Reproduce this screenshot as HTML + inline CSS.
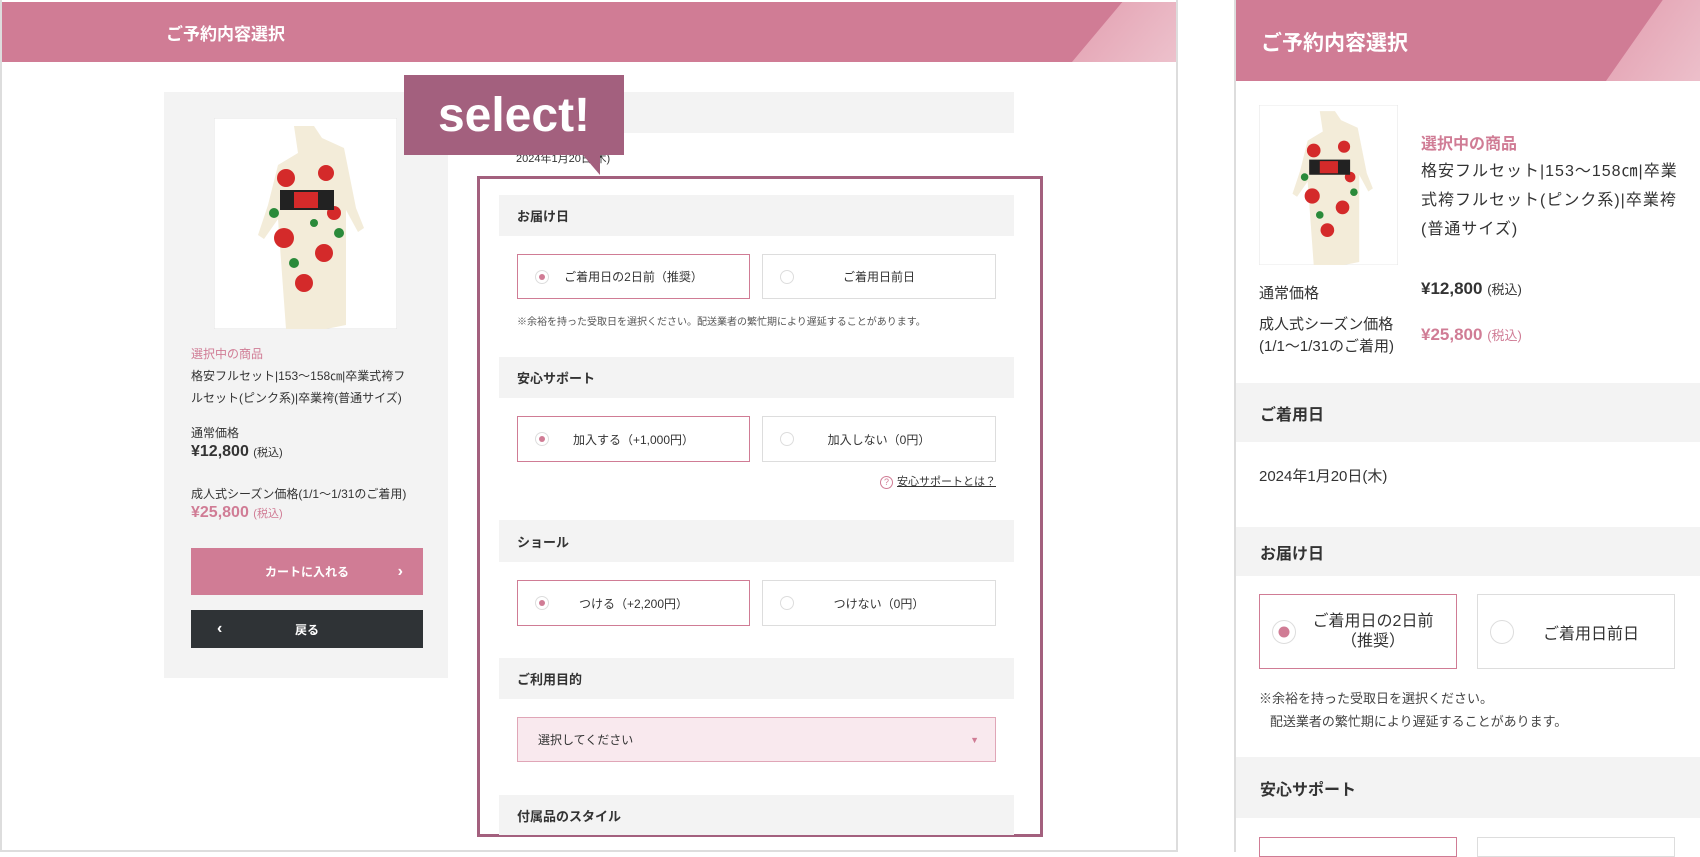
<!DOCTYPE html>
<html><head><meta charset="utf-8">
<style>
*{margin:0;padding:0;box-sizing:border-box}
body{width:1700px;height:852px;background:#fff;position:relative;overflow:hidden;font-family:"Liberation Sans","Noto Sans CJK JP",sans-serif;color:#333}
.a{position:absolute}
.bar{position:absolute;background:#f3f3f3;font-weight:bold;font-size:13px;display:flex;align-items:center;padding-left:18px;color:#333}
.opt{position:absolute;border:1px solid #ddd;background:#fff;font-size:12px;display:flex;align-items:center;justify-content:center}
.opt.on{border-color:#d07c95}
.rad{position:absolute;left:17px;top:50%;margin-top:-7px;width:14px;height:14px;border-radius:50%;border:1px solid #ddd;background:#fff}
.on .rad::after{content:"";position:absolute;left:50%;top:50%;width:50%;height:50%;transform:translate(-50%,-50%);border-radius:50%;background:#d07c95}
.pink{color:#d07c95}
.chev{position:absolute;top:50%;transform:translateY(-50%);font-size:16px;line-height:1}
</style></head><body>
<!-- left panel -->
<div class="a" style="left:0;top:0;width:1178px;height:852px;border:2px solid #ddd;border-top:none"></div>
<div class="a" style="left:2px;top:2px;width:1174px;height:60px;background:#d07c95;overflow:hidden">
<div class="a" style="left:1070px;top:0;width:200px;height:60px;background:linear-gradient(90deg,#e6aab9,#f3d7de);transform:skewX(-40deg);transform-origin:0 100%"></div>
<div class="a" style="left:164px;top:18px;color:#fff;font-size:17px;font-weight:bold">ご予約内容選択</div></div>

<div class="a" style="left:164px;top:92px;width:284px;height:586px;background:#f3f3f3"></div>
<svg class="a" style="left:214px;top:118px" width="183" height="211" viewBox="0 0 183 211"><rect width="183" height="211" fill="#fff" stroke="#e3e3e3"/>
<path d="M80 8h20l8 12 22 10 12 60 8 20-6 4-12-22v115l-20 4h-40l-8-110-14 20-6-4 10-30 10-40 20-12z" fill="#f3ecd9"/>
<circle cx="72" cy="60" r="9" fill="#d42a2a"/><circle cx="112" cy="55" r="8" fill="#d42a2a"/><circle cx="70" cy="120" r="10" fill="#d42a2a"/><circle cx="110" cy="135" r="9" fill="#d42a2a"/><circle cx="90" cy="165" r="9" fill="#d42a2a"/><circle cx="120" cy="95" r="7" fill="#d42a2a"/>
<rect x="66" y="72" width="54" height="20" fill="#222"/><rect x="80" y="74" width="24" height="16" fill="#d42a2a"/>
<circle cx="60" cy="95" r="5" fill="#2a8a3a"/><circle cx="125" cy="115" r="5" fill="#2a8a3a"/><circle cx="80" cy="145" r="5" fill="#2a8a3a"/><circle cx="100" cy="105" r="4" fill="#2a8a3a"/></svg>
<div class="a pink" style="left:191px;top:345px;font-size:12px">選択中の商品</div>
<div class="a" style="left:191px;top:365px;font-size:12px;line-height:22px;width:240px">格安フルセット|153〜158㎝|卒業式袴フ<br>ルセット(ピンク系)|卒業袴(普通サイズ)</div>
<div class="a" style="left:191px;top:424px;font-size:12px">通常価格</div>
<div class="a" style="left:191px;top:443px;font-size:16px;font-weight:bold">¥12,800 <span style="font-size:11px;font-weight:normal">(税込)</span></div>
<div class="a" style="left:191px;top:485px;font-size:12px">成人式シーズン価格(1/1〜1/31のご着用)</div>
<div class="a pink" style="left:191px;top:504px;font-size:16px;font-weight:bold">¥25,800 <span style="font-size:11px;font-weight:normal">(税込)</span></div>
<div class="a" style="left:191px;top:548px;width:232px;height:47px;background:#d07c95;color:#fff;font-size:12px;font-weight:bold;display:flex;align-items:center;justify-content:center">カートに入れる<span class="chev" style="right:20px">›</span></div>
<div class="a" style="left:191px;top:610px;width:232px;height:38px;background:#2f3336;color:#fff;font-size:12px;font-weight:bold;display:flex;align-items:center;justify-content:center">戻る<span class="chev" style="left:26px">‹</span></div>

<div class="a" style="left:477px;top:92px;width:537px;height:41px;background:#f3f3f3"></div>
<div class="a" style="left:516px;top:150px;font-size:11px">2024年1月20日(木)</div>

<div class="a" style="left:477px;top:176px;width:566px;height:661px;border:3px solid #a3607e"></div>
<div class="a" style="left:404px;top:75px;width:220px;height:80px;background:#a3607e;color:#fff;font-size:48px;font-weight:bold;display:flex;align-items:center;justify-content:center;letter-spacing:0px">select!</div>
<div class="a" style="left:582px;top:154px;width:0;height:0;border-left:18px solid transparent;border-top:21px solid #a3607e"></div>

<div class="bar" style="left:499px;top:195px;width:515px;height:41px">お届け日</div>
<div class="opt on" style="left:517px;top:254px;width:233px;height:45px"><span class="rad"></span>ご着用日の2日前（推奨）</div>
<div class="opt" style="left:762px;top:254px;width:234px;height:45px"><span class="rad"></span>ご着用日前日</div>
<div class="a" style="left:517px;top:313px;font-size:10px;color:#555">※余裕を持った受取日を選択ください。配送業者の繁忙期により遅延することがあります。</div>

<div class="bar" style="left:499px;top:357px;width:515px;height:41px">安心サポート</div>
<div class="opt on" style="left:517px;top:416px;width:233px;height:46px"><span class="rad"></span>加入する（+1,000円）</div>
<div class="opt" style="left:762px;top:416px;width:234px;height:46px"><span class="rad"></span>加入しない（0円）</div>
<div class="a" style="right:704px;top:473px;font-size:11px;text-decoration:underline"><span class="pink" style="display:inline-block;width:13px;height:13px;border:1px solid #d07c95;border-radius:50%;font-size:9px;text-align:center;line-height:11px;text-decoration:none;margin-right:4px">?</span>安心サポートとは？</div>

<div class="bar" style="left:499px;top:520px;width:515px;height:42px">ショール</div>
<div class="opt on" style="left:517px;top:580px;width:233px;height:46px"><span class="rad"></span>つける（+2,200円）</div>
<div class="opt" style="left:762px;top:580px;width:234px;height:46px"><span class="rad"></span>つけない（0円）</div>

<div class="bar" style="left:499px;top:658px;width:515px;height:41px">ご利用目的</div>
<div class="a" style="left:517px;top:717px;width:479px;height:45px;background:#f9e9ee;border:1px solid #e0a6b7;font-size:12px;padding-left:20px;display:flex;align-items:center">選択してください<span class="a pink" style="right:16px;top:17px;font-size:9px">▼</span></div>
<div class="bar" style="left:499px;top:795px;width:515px;height:40px">付属品のスタイル</div>

<!-- right panel -->
<div class="a" style="left:1234px;top:0;width:2px;height:852px;background:#ddd"></div>
<div class="a" style="left:1236px;top:0;width:464px;height:81px;background:#d07c95;overflow:hidden">
<div class="a" style="left:370px;top:0;width:200px;height:81px;background:linear-gradient(90deg,#e6aab9,#f3d7de);transform:skewX(-35deg);transform-origin:0 100%"></div>
<div class="a" style="left:25px;top:27px;color:#fff;font-size:21px;font-weight:bold">ご予約内容選択</div></div>
<svg class="a" style="left:1259px;top:105px" width="139" height="160" viewBox="0 0 183 211"><rect width="183" height="211" fill="#fff" stroke="#e3e3e3"/>
<path d="M80 8h20l8 12 22 10 12 60 8 20-6 4-12-22v115l-20 4h-40l-8-110-14 20-6-4 10-30 10-40 20-12z" fill="#f3ecd9"/>
<circle cx="72" cy="60" r="9" fill="#d42a2a"/><circle cx="112" cy="55" r="8" fill="#d42a2a"/><circle cx="70" cy="120" r="10" fill="#d42a2a"/><circle cx="110" cy="135" r="9" fill="#d42a2a"/><circle cx="90" cy="165" r="9" fill="#d42a2a"/><circle cx="120" cy="95" r="7" fill="#d42a2a"/>
<rect x="66" y="72" width="54" height="20" fill="#222"/><rect x="80" y="74" width="24" height="16" fill="#d42a2a"/>
<circle cx="60" cy="95" r="5" fill="#2a8a3a"/><circle cx="125" cy="115" r="5" fill="#2a8a3a"/><circle cx="80" cy="145" r="5" fill="#2a8a3a"/></svg>
<div class="a pink" style="left:1421px;top:130px;font-size:16px;font-weight:bold">選択中の商品</div>
<div class="a" style="left:1421px;top:157px;font-size:16px;line-height:29px;width:260px;letter-spacing:1px">格安フルセット|153〜158㎝|卒業式袴フルセット(ピンク系)|卒業袴(普通サイズ)</div>
<div class="a" style="left:1259px;top:282px;font-size:15px">通常価格</div>
<div class="a" style="left:1421px;top:279px;font-size:17px;font-weight:bold">¥12,800 <span style="font-size:13px;font-weight:normal">(税込)</span></div>
<div class="a" style="left:1259px;top:314px;font-size:15px;line-height:22px">成人式シーズン価格<br>(1/1〜1/31のご着用)</div>
<div class="a pink" style="left:1421px;top:325px;font-size:17px;font-weight:bold">¥25,800 <span style="font-size:13px;font-weight:normal">(税込)</span></div>
<div class="bar" style="left:1236px;top:383px;width:464px;height:59px;font-size:16px;padding-left:24px">ご着用日</div>
<div class="a" style="left:1259px;top:465px;font-size:15px">2024年1月20日(木)</div>
<div class="bar" style="left:1236px;top:527px;width:464px;height:49px;font-size:16px;padding-left:24px">お届け日</div>
<div class="opt on" style="left:1259px;top:594px;width:198px;height:75px;font-size:16px;text-align:center;line-height:20px"><span class="rad" style="width:24px;height:24px;margin-top:-12px;left:12px"></span><span style="margin-left:30px">ご着用日の2日前<br>（推奨）</span></div>
<div class="opt" style="left:1477px;top:594px;width:198px;height:75px;font-size:16px"><span class="rad" style="width:24px;height:24px;margin-top:-12px;left:12px"></span><span style="margin-left:30px">ご着用日前日</span></div>
<div class="a" style="left:1259px;top:687px;font-size:13px;line-height:23px;color:#444">※余裕を持った受取日を選択ください。<br>&nbsp;&nbsp;&nbsp;配送業者の繁忙期により遅延することがあります。</div>
<div class="bar" style="left:1236px;top:757px;width:464px;height:61px;font-size:16px;padding-left:24px">安心サポート</div>
<div class="a" style="left:1259px;top:837px;width:198px;height:20px;border:1px solid #d07c95"></div>
<div class="a" style="left:1477px;top:837px;width:198px;height:20px;border:1px solid #ddd"></div>
</body></html>
